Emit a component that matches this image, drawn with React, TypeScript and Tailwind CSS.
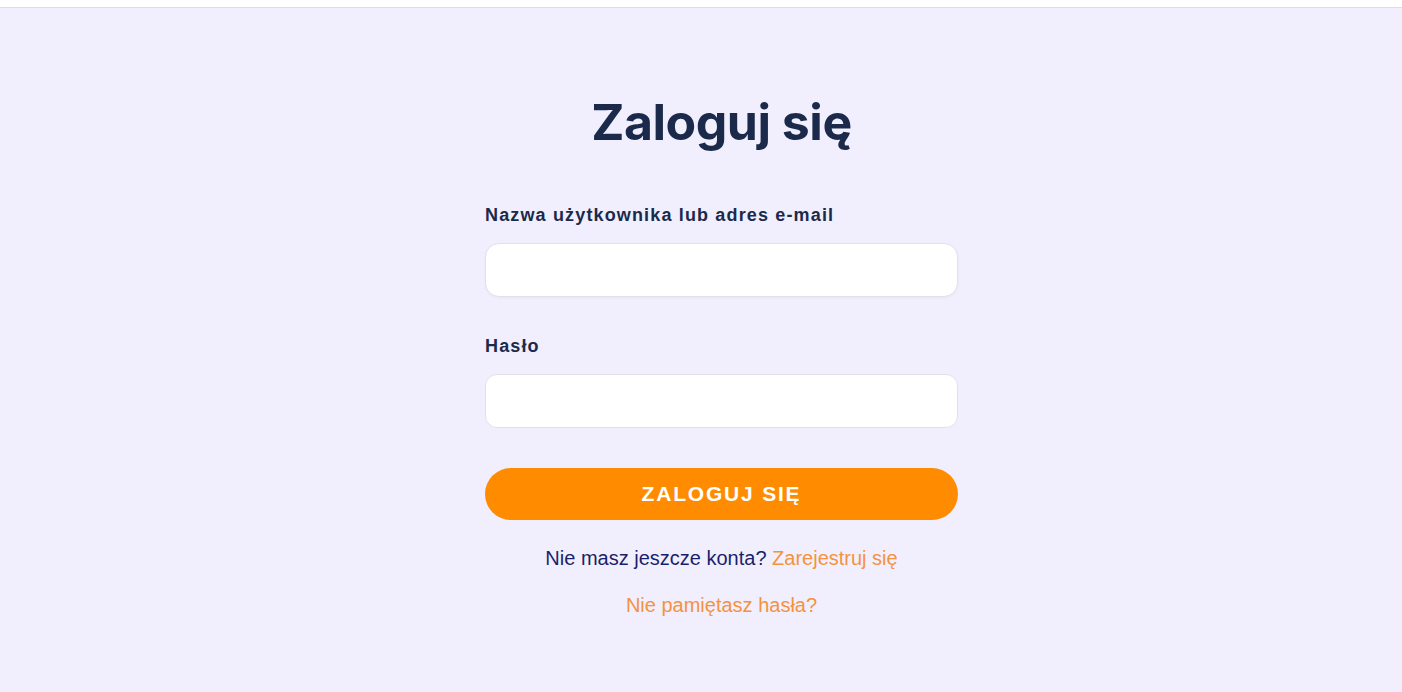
import React from "react";

export default function App() {
  return (
    <div className="min-h-screen w-full flex flex-col bg-[#f1effd]" style={{ fontFamily: '"Liberation Sans", Arial, sans-serif' }}>
      <div className="h-[8px] bg-white border-b border-[#dedede]" />
      <div className="flex flex-col items-center pt-[84px] pl-[41px]">
        <h1 className="text-[50px] leading-[60px] font-bold text-[#1b2a4a] tracking-[-0.5px]" style={{ fontFamily: 'Inter, "Liberation Sans", sans-serif' }}>
          Zaloguj się
        </h1>
        <form className="w-[473px] mt-[51px] flex flex-col" onSubmit={(e) => e.preventDefault()}>
          <label className="text-[18px] leading-[24px] font-bold text-[#1b2a4a] tracking-[1.15px]">
            Nazwa użytkownika lub adres e-mail
          </label>
          <input type="text" className="mt-[16px] h-[54px] w-full rounded-[14px] bg-white border border-[#e2e0ea] shadow-[0_1px_3px_rgba(0,0,0,0.04)] outline-none" />
          <label className="mt-[37px] text-[18px] leading-[24px] font-bold text-[#1b2a4a] tracking-[1.15px]">
            Hasło
          </label>
          <input type="password" className="mt-[16px] h-[54px] w-full rounded-[12px] bg-white border border-[#e2e0ea] outline-none" />
          <button type="submit" className="mt-[40px] h-[52px] w-full rounded-full bg-[#ff8c00] text-white text-[21px] font-bold tracking-[1.8px] uppercase">
            Zaloguj się
          </button>
          <p className="mt-[26px] text-center text-[20px] leading-[24px] text-[#1a1f6b]">
            Nie masz jeszcze konta? <a href="#" className="text-[#f5923e]">Zarejestruj się</a>
          </p>
          <p className="mt-[23px] text-center text-[20px] leading-[24px]">
            <a href="#" className="text-[#f5923e]">Nie pamiętasz hasła?</a>
          </p>
        </form>
      </div>
    </div>
  );
}
